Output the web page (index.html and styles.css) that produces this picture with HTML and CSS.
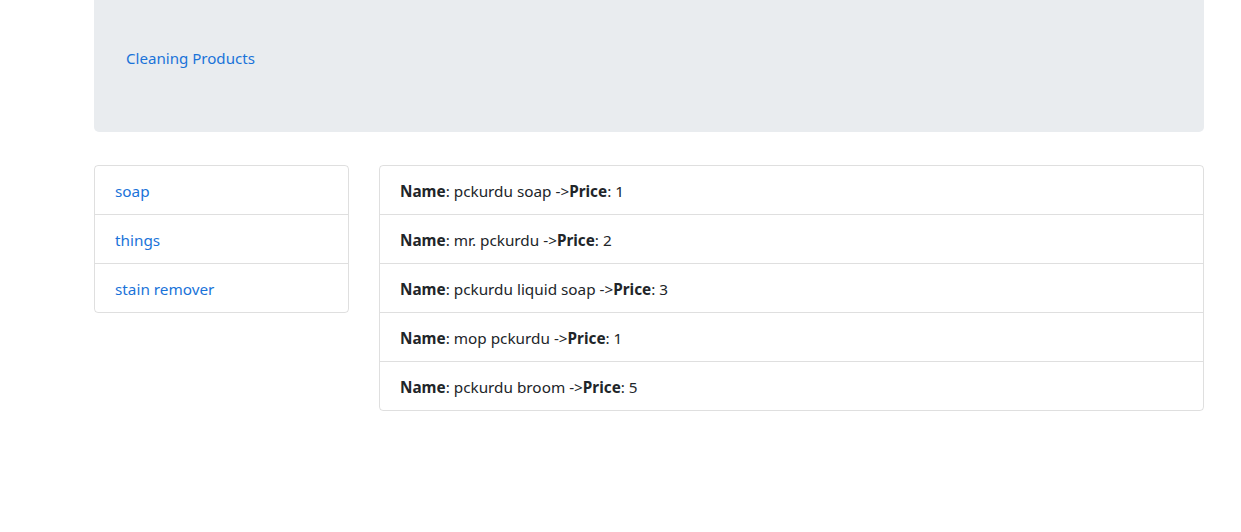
FILE: index.html
```html
<!DOCTYPE html>
<html>
<head>
<meta charset="utf-8">
<link rel="stylesheet" href="styles.css">
</head>
<body>
<div class="container">
  <div class="jumbotron">
    <a class="brand" href="#">Cleaning Products</a>
  </div>
  <div class="row">
    <div class="side">
      <ul class="list">
        <li class="item"><a href="#">soap</a></li>
        <li class="item"><a href="#">things</a></li>
        <li class="item"><a href="#">stain remover</a></li>
      </ul>
    </div>
    <div class="main">
      <ul class="list">
        <li class="item"><b>Name</b>: pckurdu soap -&gt;<b>Price</b>: 1</li>
        <li class="item"><b>Name</b>: mr. pckurdu -&gt;<b>Price</b>: 2</li>
        <li class="item"><b>Name</b>: pckurdu liquid soap -&gt;<b>Price</b>: 3</li>
        <li class="item"><b>Name</b>: mop pckurdu -&gt;<b>Price</b>: 1</li>
        <li class="item"><b>Name</b>: pckurdu broom -&gt;<b>Price</b>: 5</li>
      </ul>
    </div>
  </div>
</div>
</body>
</html>
```

FILE: styles.css
```css
* { box-sizing: border-box; }
html, body { margin: 0; padding: 0; background: #fff; }
body {
  font-family: "Noto Sans", "Open Sans", sans-serif;
  font-size: 15.3px;
  line-height: 24px;
  color: #212529;
}
.container {
  width: 1110px;
  margin-left: 94px;
}
.jumbotron {
  background: #e9ecef;
  height: 132px;
  padding: 46px 32px 0;
  border-radius: 0 0 5px 5px;
}
a { color: #1a73d9; text-decoration: none; }
.brand { font-size: 15.1px; }
.row {
  display: flex;
  gap: 30px;
  margin-top: 33px;
}
.side { width: 255px; flex: none; }
.main { flex: 1; }
.list {
  list-style: none;
  margin: 0;
  padding: 0;
  border: 1px solid rgba(0,0,0,.125);
  border-radius: 4px;
}
.item {
  padding: 13px 20px 11px;
  border-top: 1px solid rgba(0,0,0,.125);
  height: 49px;
}
.item:first-child { border-top: 0; height: 48px; }
b { font-weight: 700; }
```
